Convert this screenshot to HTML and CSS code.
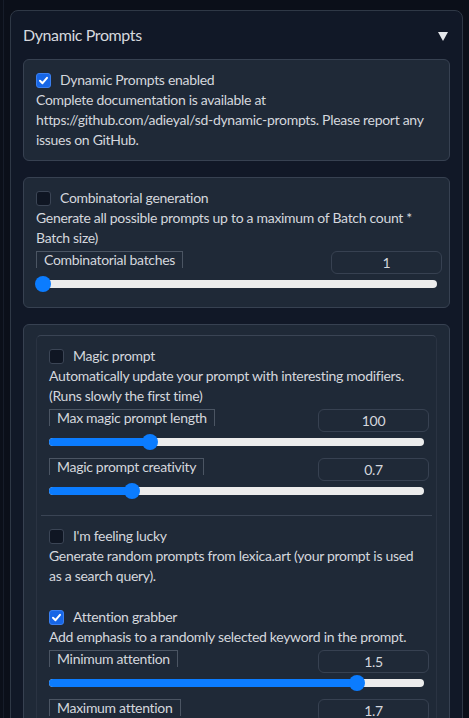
FILE: index.html
```html
<!DOCTYPE html>
<html>
<head>
<meta charset="utf-8">
<link rel="stylesheet" href="styles.css">
</head>
<body>
<div class="page">
  <div class="accordion">
    <div class="acc-head">
      <span class="acc-title">Dynamic Prompts</span>
      <svg class="caret" width="10" height="9" viewBox="0 0 10 9"><polygon points="0,0 10,0 5,9" fill="#e5e7eb"/></svg>
    </div>
    <div class="acc-body">
      <div class="block">
        <label class="check"><span class="box on"><svg width="11" height="11" viewBox="0 0 11 11"><polyline points="2,5.8 4.5,8.2 9,2.8" fill="none" stroke="#fff" stroke-width="2" stroke-linecap="round" stroke-linejoin="round"/></svg></span><span>Dynamic Prompts enabled</span></label>
        <p class="desc">Complete documentation is available at https://github.com/adieyal/sd-dynamic-prompts. Please report any issues on GitHub.</p>
      </div>

      <div class="block">
        <label class="check"><span class="box"></span><span>Combinatorial generation</span></label>
        <p class="desc">Generate all possible prompts up to a maximum of Batch count * Batch size)</p>
        <div class="slider">
          <div class="s-head"><span class="s-label">Combinatorial batches</span><span class="num">1</span></div>
          <div class="s-row"><div class="track"><div class="fill" style="width:1.75%"></div><span class="thumb"></span></div></div>
        </div>
      </div>

      <div class="block">
        <div class="group">
          <div class="section">
            <label class="check"><span class="box"></span><span>Magic prompt</span></label>
            <p class="desc">Automatically update your prompt with interesting modifiers. (Runs slowly the first time)</p>
            <div class="slider">
              <div class="s-head"><span class="s-label">Max magic prompt length</span><span class="num">100</span></div>
              <div class="s-row"><div class="track"><div class="fill" style="width:27%"></div><span class="thumb"></span></div></div>
            </div>
            <div class="slider">
              <div class="s-head"><span class="s-label">Magic prompt creativity</span><span class="num">0.7</span></div>
              <div class="s-row"><div class="track"><div class="fill" style="width:22.2%"></div><span class="thumb"></span></div></div>
            </div>
          </div>
          <div class="section sep">
            <label class="check"><span class="box"></span><span>I'm feeling lucky</span></label>
            <p class="desc">Generate random prompts from lexica.art (your prompt is used as a search query).</p>
            <label class="check spaced"><span class="box on"><svg width="11" height="11" viewBox="0 0 11 11"><polyline points="2,5.8 4.5,8.2 9,2.8" fill="none" stroke="#fff" stroke-width="2" stroke-linecap="round" stroke-linejoin="round"/></svg></span><span>Attention grabber</span></label>
            <p class="desc">Add emphasis to a randomly selected keyword in the prompt.</p>
            <div class="slider">
              <div class="s-head"><span class="s-label">Minimum attention</span><span class="num">1.5</span></div>
              <div class="s-row"><div class="track"><div class="fill" style="width:82.1%"></div><span class="thumb"></span></div></div>
            </div>
            <div class="slider">
              <div class="s-head"><span class="s-label">Maximum attention</span><span class="num">1.7</span></div>
              <div class="s-row"><div class="track"><div class="fill" style="width:90%"></div><span class="thumb"></span></div></div>
            </div>
          </div>
        </div>
      </div>
    </div>
  </div>
</div>
</body>
</html>
```

FILE: styles.css
```css
* { box-sizing: border-box; }
html, body { margin: 0; background: #0b0f19; }
body {
  font-family: Lato, "Liberation Sans", sans-serif;
  font-size: 14px;
  line-height: 20px;
  letter-spacing: -0.3px;
  color: #d4d7dd;
  overflow: hidden;
}
.page {
  margin-left: 3px;
  border-left: 1px solid #161c29;
  padding: 10px 6px 0 6px;
  min-height: 718px;
}
.accordion {
  background: #111827;
  border: 1px solid #2f3846;
  border-radius: 8px;
}
.acc-head {
  display: flex;
  align-items: center;
  justify-content: space-between;
  padding: 12px 14px 12px 12px;
  height: 48px;
}
.acc-title { font-size: 16px; line-height: 24px; letter-spacing: -0.4px; color: #d6d9de; }
.caret { margin-top: 2px; }
.acc-body {
  padding: 0 12px 12px;
  display: flex;
  flex-direction: column;
  gap: 16px;
}
.block {
  background: #1f2937;
  border: 1px solid #374151;
  border-radius: 6px;
  padding: 10px 12px;
}
.check {
  display: flex;
  align-items: center;
  gap: 9px;
  height: 20px;
}
.check.spaced { margin-top: 21px; }
.box {
  width: 15px;
  height: 15px;
  flex: none;
  border-radius: 3px;
  border: 1px solid #3b4555;
  background: #0f1623;
  display: flex;
  align-items: center;
  justify-content: center;
}
.box.on { background: #1766e6; border-color: #3a7ff0; }
.desc { margin: 0; }
.slider { margin-top: 3px; margin-bottom: 4px; }
.slider + .slider { margin-top: 7px; }
.s-head {
  display: flex;
  justify-content: space-between;
  align-items: flex-start;
  height: 24px;
}
.s-label {
  border: 1px solid #4b5563;
  border-bottom: none;
  padding: 0 7px;
  height: 17px;
  line-height: 16px;
}
.num {
  width: 111px;
  height: 23px;
  border: 1px solid #374151;
  border-radius: 6px;
  margin-right: -5px;
  text-align: center;
  line-height: 21px;
}
.s-row { height: 18px; display: flex; align-items: center; }
.track {
  flex: 1;
  height: 8px;
  border-radius: 4px;
  background: #ececec;
  display: flex;
  align-items: center;
}
.fill {
  height: 8px;
  background: #0b7cff;
  border-radius: 4px 0 0 4px;
}
.thumb {
  width: 16px;
  height: 16px;
  border-radius: 50%;
  background: #0b7cff;
  margin-left: -8px;
  flex: none;
}
.group {
  border: 1px solid #2a3342;
  border-top-color: #3a4454;
  border-radius: 5px;
}
.section { padding: 10px 12px 11px; }
.section.sep {
  border-top: 1px solid #3a4454;
  margin: 0 4px;
  padding: 10px 8px;
}
```
